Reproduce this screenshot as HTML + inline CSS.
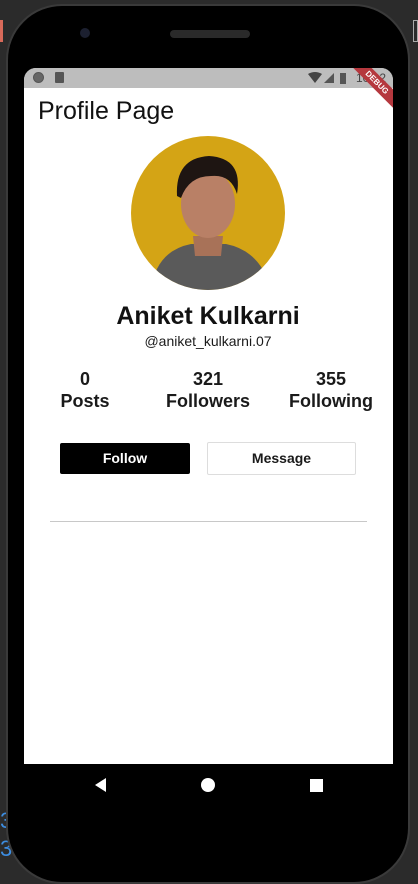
<!DOCTYPE html><html><head><style>
body{margin:0;width:418px;height:860px;background:#2b2b2b;position:relative;overflow:hidden;font-family:"Liberation Sans",Arial,sans-serif}
.phone{position:absolute;left:6px;top:4px;width:404px;height:880px;background:#000;border-radius:56px;border:2px solid #3a3a3a;box-sizing:border-box}
.screen{position:absolute;left:24px;top:68px;width:369px;height:696px;background:#fff;border-radius:12px 12px 0 0;overflow:hidden;color:#1a1a1a}
.sb{height:20px;background:#bdbdbd;position:relative}
.abs{position:absolute}
.c{position:absolute;text-align:center;transform:translateX(-50%);white-space:nowrap}
</style></head><body>
<div class="abs" style="left:0;top:20px;width:3px;height:22px;background:#d86a5a"></div>
<div class="abs" style="left:413px;top:20px;width:5px;height:22px;border:1px solid #aaa;box-sizing:border-box"></div>
<div class="abs" style="left:0;top:808px;color:#3d8de0;font-size:22px">3</div>
<div class="abs" style="left:0;top:836px;color:#3d8de0;font-size:22px">39</div>
<div class="phone"></div>
<div class="abs" style="left:80px;top:28px;width:10px;height:10px;border-radius:50%;background:#1c2030"></div>
<div class="abs" style="left:170px;top:30px;width:80px;height:8px;border-radius:4px;background:#2a2a2a"></div>
<div class="screen">
<div class="sb">
<div class="abs" style="left:9px;top:4px;width:9px;height:9px;border-radius:50%;background:#666;border:1px solid #555"></div>
<div class="abs" style="left:31px;top:4px;width:9px;height:11px;background:#555;border-radius:1px"></div>
<svg class="abs" style="left:284px;top:3px" width="40" height="14"><path d="M0 3 Q7 -1 14 3 L7 12Z" fill="#444"/><path d="M16 12 L26 2 L26 12Z" fill="#555"/><rect x="32" y="2" width="6" height="11" fill="#555"/></svg>
<div class="abs" style="left:332px;top:3px;font-size:12px;color:#444">10:02</div>
<div class="abs" style="left:318px;top:8px;width:70px;height:13px;background:#b5383e;transform:rotate(45deg);color:#fff;font-size:8px;font-weight:bold;text-align:center;line-height:13px">DEBUG</div>
</div>
<div class="abs" style="left:14px;top:29px;font-size:25px;color:#111">Profile Page</div>
<svg class="abs" style="left:107px;top:68px" width="154" height="154" viewBox="0 0 154 154">
<defs><clipPath id="cp"><circle cx="77" cy="77" r="77"/></clipPath></defs>
<g clip-path="url(#cp)">
<rect width="154" height="154" fill="#d4a415"/>
<path d="M20 154 Q25 115 60 108 L95 108 Q130 115 140 154Z" fill="#5a5a5a"/>
<path d="M62 100 L92 100 L90 120 L64 120Z" fill="#a87258"/>
<ellipse cx="77" cy="68" rx="27" ry="34" fill="#b98066"/>
<path d="M46 60 Q44 22 78 20 Q112 22 106 58 Q100 38 80 40 Q58 40 50 62Z" fill="#1e1512"/>
</g></svg>
<div class="c" style="left:184px;top:234px;font-size:25px;font-weight:bold;color:#111">Aniket Kulkarni</div>
<div class="c" style="left:184px;top:265px;font-size:14px">@aniket_kulkarni.07</div>
<div class="c" style="left:61px;top:300px;font-size:18px;font-weight:bold;line-height:22px">0<br>Posts</div>
<div class="c" style="left:184px;top:300px;font-size:18px;font-weight:bold;line-height:22px">321<br>Followers</div>
<div class="c" style="left:307px;top:300px;font-size:18px;font-weight:bold;line-height:22px">355<br>Following</div>
<div class="abs" style="left:36px;top:375px;width:130px;height:31px;background:#000;border-radius:2px;color:#fff;font-weight:bold;font-size:14px;text-align:center;line-height:31px">Follow</div>
<div class="abs" style="left:183px;top:374px;width:149px;height:33px;border:1px solid #ddd;box-sizing:border-box;border-radius:2px;font-weight:bold;font-size:14px;text-align:center;line-height:31px">Message</div>
<div class="abs" style="left:26px;top:453px;width:317px;height:1px;background:#c8c8c8"></div>
</div>
<svg class="abs" style="left:90px;top:775px" width="240" height="20">
<path d="M5 10 L16 3 L16 17Z" fill="#fff"/><circle cx="118" cy="10" r="7" fill="#fff"/><rect x="220" y="4" width="13" height="13" fill="#fff"/></svg>
</body></html>
